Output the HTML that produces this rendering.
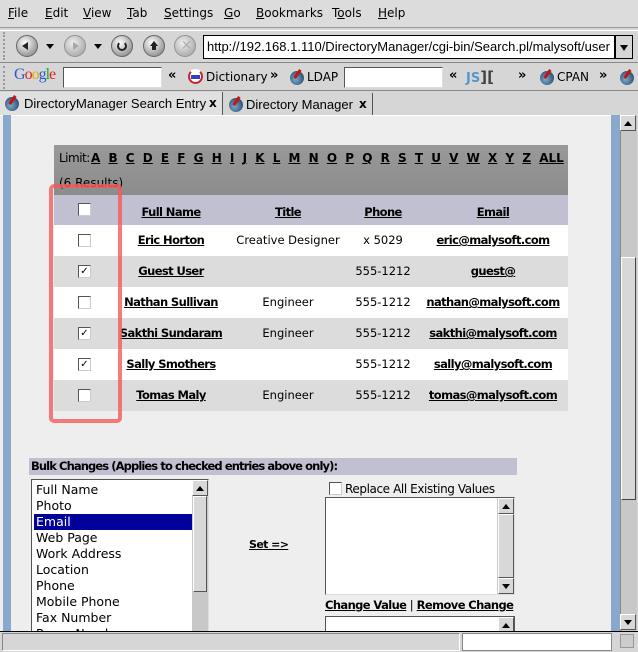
<!DOCTYPE html>
<html><head><meta charset="utf-8"><style>
*{margin:0;padding:0;box-sizing:border-box}
body{width:638px;height:652px;overflow:hidden;background:#d6d6d6;font-family:"DejaVu Sans","Liberation Sans",sans-serif;font-size:12px;color:#000;position:relative}
.a{position:absolute}
.menu span{position:absolute;top:6px;font-size:12px}
.menu u{text-decoration:underline}
.btn{position:absolute;width:22px;height:22px;border-radius:50%;background:radial-gradient(circle at 40% 35%,#fff,#aaa 60%,#777);border:1px solid #666}
.btn i{position:absolute;left:6px;top:6px;width:0;height:0}
.dd{position:absolute;width:0;height:0;border-left:4px solid transparent;border-right:4px solid transparent;border-top:5px solid #000}
.inp{position:absolute;background:#fff;border:1px solid #555;border-right-color:#ddd;border-bottom-color:#ddd}
.ico{position:absolute;width:14px;height:14px;border-radius:50%;background:radial-gradient(circle at 40% 60%,#7ac,#357 70%);}
.ico:after{content:"";position:absolute;left:6px;top:-2px;width:3px;height:10px;background:#c11;transform:rotate(35deg)}
.tbl{font-family:"DejaVu Sans",sans-serif}
.row{position:absolute;left:54px;width:514px;height:31px}
.row span{position:absolute;top:8px;font-size:11.5px;white-space:nowrap}
.b{font-weight:bold;text-decoration:underline;letter-spacing:-0.6px}
.cb{position:absolute;width:13px;height:13px;background:#fff;border:1px solid #555;border-right-color:#ccc;border-bottom-color:#ccc;font-size:10px;line-height:11px;text-align:center}
.c{transform:translateX(-50%)}
.sb{position:absolute;background:#c8c8c8}
.arr{position:absolute;width:16px;height:16px;background:#d8d8d8;border:1px solid #fff;border-right-color:#555;border-bottom-color:#555}
.up:after{content:"";position:absolute;left:3px;top:5px;border-left:4px solid transparent;border-right:4px solid transparent;border-bottom:5px solid #000}
.dn:after{content:"";position:absolute;left:3px;top:5px;border-left:4px solid transparent;border-right:4px solid transparent;border-top:5px solid #000}
.li{position:absolute;left:2px;width:159px;height:16px;font-size:12.5px;padding-left:2px;line-height:16px}
.lim{position:absolute;left:91px;top:151px;width:473px;display:flex;justify-content:space-between;font-size:12px}
.lim span{font-weight:bold;text-decoration:underline}
</style></head><body>
<div class="a menu" style="left:0;top:0;width:638px;height:28px;background:#dcdcdc;border-bottom:1px solid #999">
<span style="left:8px"><u>F</u>ile</span><span style="left:45px"><u>E</u>dit</span><span style="left:83px"><u>V</u>iew</span><span style="left:127px"><u>T</u>ab</span><span style="left:164px"><u>S</u>ettings</span><span style="left:224px"><u>G</u>o</span><span style="left:256px"><u>B</u>ookmarks</span><span style="left:332px">T<u>o</u>ols</span><span style="left:378px"><u>H</u>elp</span>
</div>
<div class="a" style="left:0;top:30px;width:638px;height:33px;background:#d6d6d6;border-top:1px solid #fff;border-bottom:1px solid #888"></div>
<div class="a" style="left:3px;top:32px;width:5px;height:28px;border-left:2px dotted #999"></div>
<div class="btn" style="left:16px;top:35px"><i style="left:5px;top:6px;border-top:4px solid transparent;border-bottom:4px solid transparent;border-right:6px solid #222"></i></div><div class="dd" style="left:46px;top:44px"></div>
<div class="btn" style="left:64px;top:35px;opacity:.6"><i style="left:8px;top:6px;border-top:4px solid transparent;border-bottom:4px solid transparent;border-left:6px solid #888"></i></div><div class="dd" style="left:94px;top:44px"></div>
<div class="btn" style="left:111px;top:35px"><i style="left:5px;top:5px;width:10px;height:10px;border:2px solid #222;border-radius:50%;border-top-color:transparent"></i></div>
<div class="btn" style="left:143px;top:35px"><i style="left:6px;top:5px;border-left:4px solid transparent;border-right:4px solid transparent;border-bottom:5px solid #222"></i><i style="left:8px;top:10px;width:4px;height:4px;background:#222"></i></div>
<div class="btn" style="left:174px;top:35px;opacity:.6"><i style="left:6px;top:2px;color:#888;font-size:13px;font-style:normal">×</i></div>
<div class="inp" style="left:203px;top:35px;width:412px;height:24px;font-family:'Liberation Sans',sans-serif;font-size:13px;padding:3px 3px;border:1px solid #000">http://192.168.1.110/DirectoryManager/cgi-bin/Search.pl/malysoft/user</div>
<div class="a" style="left:615px;top:35px;width:18px;height:24px;background:#d6d6d6;border:1px solid #000"></div><div class="dd" style="left:620px;top:45px;border-top-width:6px"></div>
<div class="a" style="left:0;top:64px;width:638px;height:27px;background:#d6d6d6;border-bottom:1px solid #888"></div>
<div class="a" style="left:3px;top:66px;width:5px;height:23px;border-left:2px dotted #999"></div>
<div class="a" style="left:14px;top:66px;font-family:'Liberation Serif',serif;font-size:16px;letter-spacing:-1px"><span style="color:#2a5bd7">G</span><span style="color:#d22">o</span><span style="color:#e9a800">o</span><span style="color:#2a5bd7">g</span><span style="color:#2a2">l</span><span style="color:#d22">e</span></div>
<div class="inp" style="left:63px;top:67px;width:99px;height:21px"></div>
<div class="a" style="left:168px;top:68px;font-size:13px;font-weight:bold">«</div>
<div class="a" style="left:188px;top:69px;width:15px;height:15px;border-radius:50%;background:#fff;border:2px solid #c22;border-top-color:#fff"><div style="margin:4px 1px;height:4px;background:#24c"></div></div>
<div class="a" style="left:206px;top:70px;font-size:12px">Dictionary</div>
<div class="a" style="left:270px;top:68px;font-size:13px;font-weight:bold">»</div>
<div class="ico" style="left:290px;top:71px"></div>
<div class="a" style="left:307px;top:70px;font-size:12px">LDAP</div>
<div class="inp" style="left:344px;top:67px;width:99px;height:21px"></div>
<div class="a" style="left:449px;top:68px;font-size:13px;font-weight:bold">«</div>
<div class="a" style="left:466px;top:68px;width:46px;height:18px;color:#59c;font-weight:bold;font-size:13px">JS<span style="color:#444;font-size:15px">]</span><span style="color:#444;font-size:15px">[</span></div>
<div class="a" style="left:518px;top:68px;font-size:13px;font-weight:bold">»</div>
<div class="ico" style="left:540px;top:71px"></div>
<div class="a" style="left:557px;top:70px;font-size:12px">CPAN</div>
<div class="a" style="left:599px;top:68px;font-size:13px;font-weight:bold">»</div>
<div class="ico" style="left:620px;top:71px"></div>
<div class="a" style="left:0;top:92px;width:223px;height:23px;background:#e0e0e0;border-right:1px solid #555"></div>
<div class="ico" style="left:5px;top:97px"></div>
<div class="a" style="left:24px;top:96px;font-family:'Liberation Sans',sans-serif;font-size:13px">DirectoryManager Search Entry</div>
<div class="a" style="left:209px;top:96px;font-weight:bold">x</div>
<div class="a" style="left:224px;top:93px;width:149px;height:22px;background:#d6d6d6;border-right:1px solid #555"></div>
<div class="ico" style="left:229px;top:98px"></div>
<div class="a" style="left:246px;top:97px;font-family:'Liberation Sans',sans-serif;font-size:13px">Directory Manager</div>
<div class="a" style="left:359px;top:97px;font-weight:bold">x</div>
<div class="a" style="left:0;top:115px;width:620px;height:516px;background:#eeeeee;border-top:1px solid #fff"></div>
<div class="a" style="left:3px;top:115px;width:8px;height:516px;background:#88a8cc"></div>
<div class="a" style="left:611px;top:115px;width:9px;height:516px;background:#88a8cc"></div>
<div class="sb" style="left:620px;top:115px;width:17px;height:516px;border-left:1px solid #888"></div>
<div class="arr up" style="left:620px;top:115px"></div>
<div class="a" style="left:621px;top:257px;width:15px;height:243px;background:#d8d8d8;border:1px solid #fff;border-right-color:#444;border-bottom-color:#444"></div>
<div class="arr dn" style="left:620px;top:614px"></div>
<div class="tbl">
<div class="a" style="left:54px;top:145px;width:514px;height:50px;background:linear-gradient(#999,#8c8c8c)"></div>
<div class="a" style="left:59px;top:151px;font-size:12px;letter-spacing:-0.5px">Limit:</div>
<div class="lim"><span>A</span><span>B</span><span>C</span><span>D</span><span>E</span><span>F</span><span>G</span><span>H</span><span>I</span><span>J</span><span>K</span><span>L</span><span>M</span><span>N</span><span>O</span><span>P</span><span>Q</span><span>R</span><span>S</span><span>T</span><span>U</span><span>V</span><span>W</span><span>X</span><span>Y</span><span>Z</span><span>ALL</span></div>
<div class="a" style="left:59px;top:176px;font-size:12px">(6 Results)</div>
<div class="row" style="top:195px;height:30px;background:#c0c0d0"><div class="cb" style="left:24px;top:8px"></div>
<span class="b c" style="left:117px;top:10px">Full Name</span><span class="b c" style="left:234px;top:10px">Title</span><span class="b c" style="left:329px;top:10px">Phone</span><span class="b c" style="left:439px;top:10px">Email</span></div>
<div class="row" style="top:225px;background:#fff"><div class="cb" style="left:24px;top:9px"></div><span class="b c" style="left:117px">Eric Horton</span><span class="c" style="left:234px">Creative Designer</span><span class="c" style="left:329px">x 5029</span><span class="b c" style="left:439px">eric@malysoft.com</span></div>
<div class="row" style="top:256px;background:#dcdcdc"><div class="cb" style="left:24px;top:9px">✓</div><span class="b c" style="left:117px">Guest User</span><span class="c" style="left:329px">555-1212</span><span class="b c" style="left:439px">guest@</span></div>
<div class="row" style="top:287px;background:#fff"><div class="cb" style="left:24px;top:9px"></div><span class="b c" style="left:117px">Nathan Sullivan</span><span class="c" style="left:234px">Engineer</span><span class="c" style="left:329px">555-1212</span><span class="b c" style="left:439px">nathan@malysoft.com</span></div>
<div class="row" style="top:318px;background:#dcdcdc"><div class="cb" style="left:24px;top:9px">✓</div><span class="b c" style="left:117px">Sakthi Sundaram</span><span class="c" style="left:234px">Engineer</span><span class="c" style="left:329px">555-1212</span><span class="b c" style="left:439px">sakthi@malysoft.com</span></div>
<div class="row" style="top:349px;background:#fff"><div class="cb" style="left:24px;top:9px">✓</div><span class="b c" style="left:117px">Sally Smothers</span><span class="c" style="left:329px">555-1212</span><span class="b c" style="left:439px">sally@malysoft.com</span></div>
<div class="row" style="top:380px;background:#dcdcdc"><div class="cb" style="left:24px;top:9px"></div><span class="b c" style="left:117px">Tomas Maly</span><span class="c" style="left:234px">Engineer</span><span class="c" style="left:329px">555-1212</span><span class="b c" style="left:439px">tomas@malysoft.com</span></div>
</div>
<div class="a" style="left:49px;top:184px;width:73px;height:239px;border:4px solid rgba(245,90,90,.8);border-radius:5px"></div>
<div class="a" style="left:29px;top:458px;width:488px;height:17px;background:#c0c0d0;font-weight:bold;font-size:11.5px;padding:1px 2px;letter-spacing:-0.9px">Bulk Changes (Applies to checked entries above only):</div>
<div class="a" style="left:31px;top:479px;width:178px;height:152px;background:#fff;border:1px solid #555;border-right-color:#ddd;border-bottom:none;overflow:hidden">
<div class="li" style="top:2px">Full Name</div><div class="li" style="top:18px">Photo</div><div class="li" style="top:34px;background:#00009a;color:#fff">Email</div><div class="li" style="top:50px">Web Page</div><div class="li" style="top:66px">Work Address</div><div class="li" style="top:82px">Location</div><div class="li" style="top:98px">Phone</div><div class="li" style="top:114px">Mobile Phone</div><div class="li" style="top:130px">Fax Number</div><div class="li" style="top:146px">Pager Number</div>
<div class="sb" style="left:160px;top:0;width:16px;height:152px"></div><div class="arr up" style="left:160px;top:0"></div>
<div class="a" style="left:161px;top:16px;width:14px;height:96px;background:#d8d8d8;border:1px solid #fff;border-right-color:#555;border-bottom-color:#555"></div>
</div>
<div class="a b" style="left:249px;top:538px;font-size:11px">Set =&gt;</div>
<div class="cb" style="left:329px;top:482px"></div>
<div class="a" style="left:345px;top:482px;font-size:12px;letter-spacing:-0.4px">Replace All Existing Values</div>
<div class="a" style="left:325px;top:497px;width:190px;height:98px;background:#fff;border:1px solid #555;border-right-color:#ddd;border-bottom-color:#ddd">
<div class="sb" style="left:171px;top:0;width:17px;height:96px"></div><div class="arr up" style="left:172px;top:0"></div><div class="arr dn" style="left:172px;top:80px"></div>
<div class="a" style="left:172px;top:16px;width:16px;height:64px;background:#d8d8d8;border:1px solid #fff;border-right-color:#555;border-bottom-color:#555"></div></div>
<div class="a" style="left:325px;top:598px;font-size:11.5px;letter-spacing:-0.3px"><span class="b">Change Value</span> | <span class="b">Remove Change</span></div>
<div class="a" style="left:325px;top:616px;width:190px;height:15px;background:#fff;border:1px solid #555;border-bottom:none;overflow:hidden"><div class="arr up" style="left:172px;top:0"></div></div>
<div class="a" style="left:0;top:631px;width:638px;height:21px;background:#d6d6d6;border-top:1px solid #000"></div>
<div class="a" style="left:2px;top:633px;width:458px;height:18px;border:1px solid #888;border-right-color:#fff;border-bottom-color:#fff"></div>
<div class="a" style="left:462px;top:633px;width:150px;height:18px;background:#fff;border:1px solid #888"></div>
<div class="a" style="left:620px;top:634px;width:14px;height:14px;border:1px solid #999;background:#ccc"></div>
</body></html>
